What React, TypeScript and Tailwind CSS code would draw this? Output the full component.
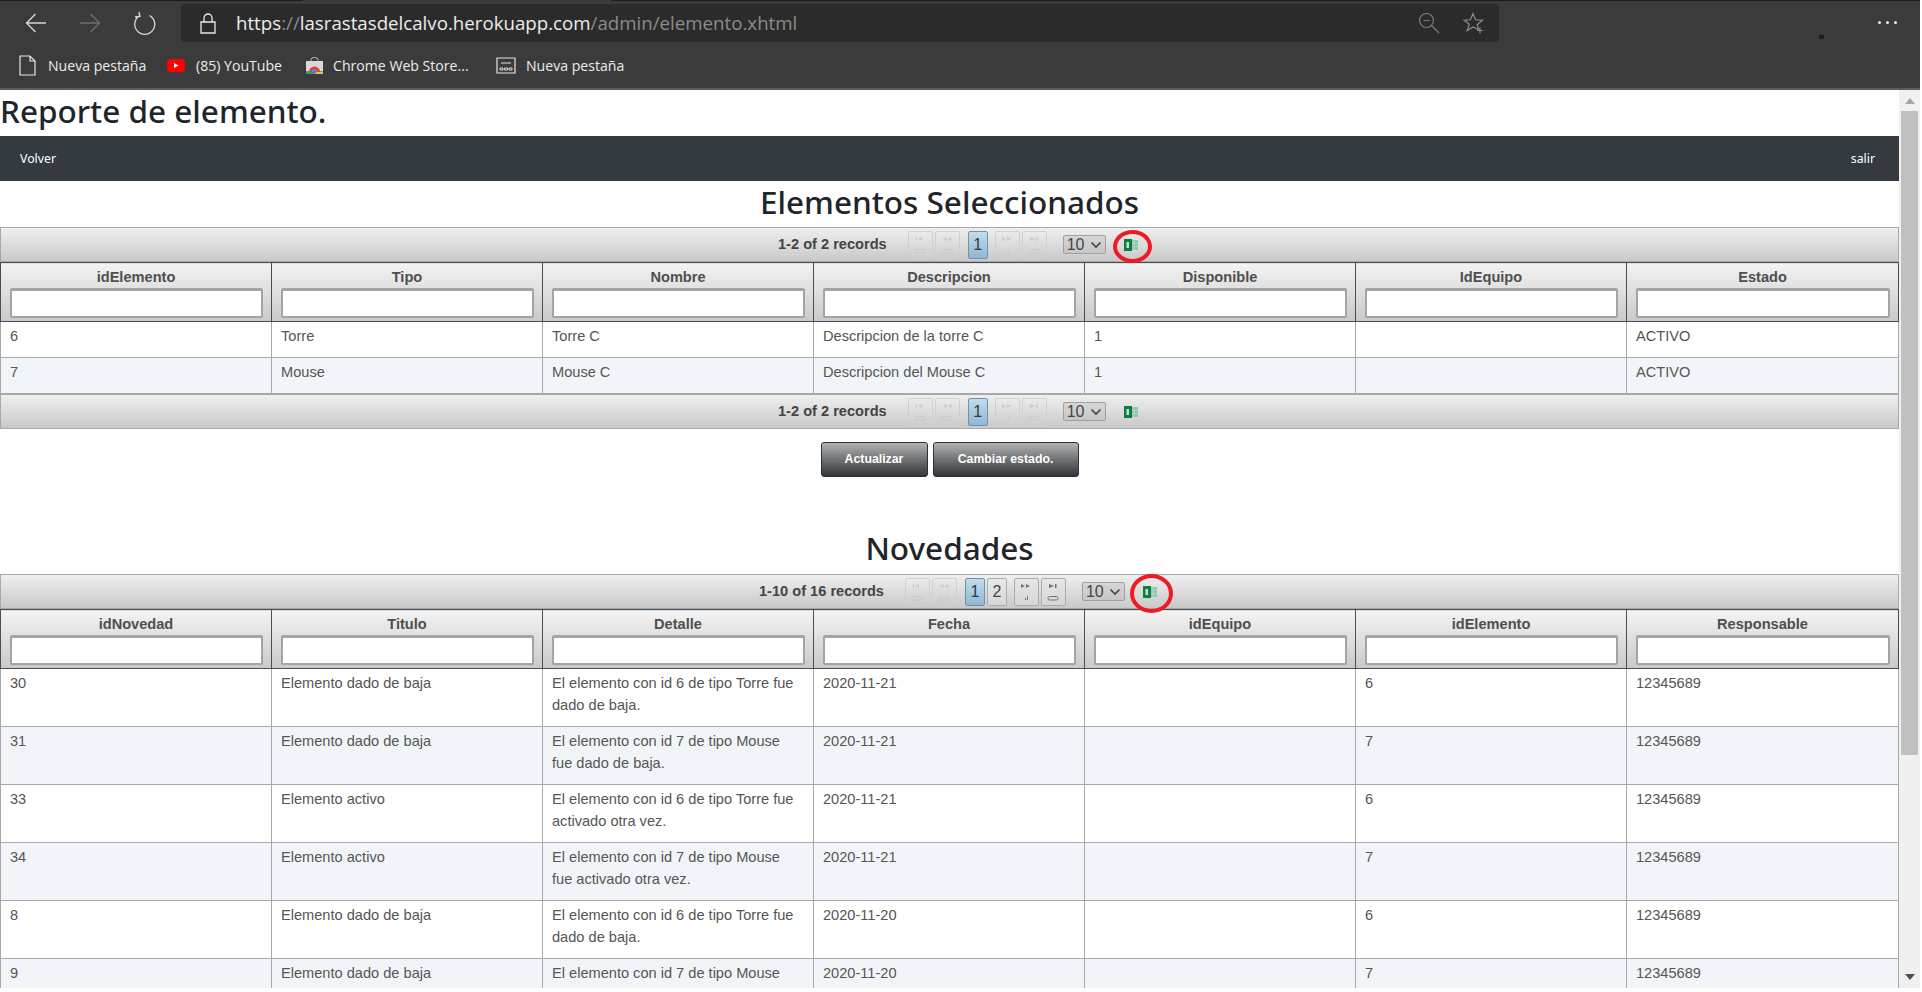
import React from 'react';

const ExcelIcon = () => (
  <svg width="14" height="12" viewBox="0 0 14 12" className="block">
    <rect x="6" y="1" width="8" height="10" fill="#8cc7a6" />
    <path d="M10 1v10M6 4.300h8M6 7.600h8" stroke="#b7dcc7" strokeWidth="0.900" />
    <rect x="0" y="0" width="8" height="12" fill="#107c41" />
    <rect x="2.500" y="3" width="2.500" height="6" fill="#bfe3cf" />
  </svg>
);

const Ring = ({ className }: { className: string }) => (
  <div className={`absolute border-[4px] border-[#ed1c24] rounded-[50%] ${className}`}></div>
);

// the small two part glyph of the pager buttons
const PagerGlyph = ({ kind }: { kind: 'first' | 'prev' | 'next' | 'last' }) => (
  <svg width="16" height="20" viewBox="0 0 16 20" className="block">
    {kind === 'first' && <path d="M4 2h1v4H4zM10 2v4L6 4z" fill="currentColor" />}
    {kind === 'prev' && <path d="M7.500 2v4L3.500 4zM12.500 2v4L8.500 4z" fill="currentColor" />}
    {kind === 'next' && <path d="M3 2v4l4-2zM8 2v4l4-2z" fill="currentColor" />}
    {kind === 'last' && <path d="M4 2v4l5-2zM10 2h1.500v4H10z" fill="currentColor" />}
    {kind === 'next' ? (
      <path d="M7 18v-2h1v2zM9 18v-4h1v4z" fill="currentColor" />
    ) : (
      <rect x="3" y="14.500" width="10" height="3.500" rx="1.500" fill="none" stroke="currentColor" />
    )}
  </svg>
);

const PagerButton = ({ kind, disabled }: { kind: 'first' | 'prev' | 'next' | 'last'; disabled: boolean }) => (
  <span
    className={`flex items-center justify-center w-[25px] h-[28px] rounded-[2px] border ${
      disabled
        ? 'border-[#d0d0d0] text-[#cacaca]'
        : 'border-[#ababab] text-[#6a747c] bg-linear-to-b from-[#e6e6e6] to-[#d6d6d6]'
    }`}
  >
    <PagerGlyph kind={kind} />
  </span>
);

const PageNumber = ({ n, active }: { n: number; active?: boolean }) => (
  <span
    className={`flex items-center justify-center w-[20px] h-[28px] rounded-[2px] border text-[16px] ${
      active
        ? 'border-[#6d93ad] bg-linear-to-b from-[#c2dcec] to-[#8fb8d2] text-[#2f3a42]'
        : 'border-[#ababab] bg-linear-to-b from-[#e8e8e8] to-[#d6d6d6] text-[#444]'
    }`}
  >
    {n}
  </span>
);

const Pager = ({
  label,
  pages,
  nextEnabled,
  ring,
  offset,
}: {
  label: string;
  pages: number[];
  nextEnabled: boolean;
  ring?: string;
  offset: string;
}) => (
  <div className="relative h-[35px] border border-[#a8a8a8] bg-linear-to-b from-[#efefef] to-[#c9c9c9]">
    <div className={`flex items-center h-full ${offset}`}>
      <span className="font-bold text-[14.600px] text-[#444]">{label}</span>
      <div className="flex items-center gap-[2px] ml-[21px]">
        <PagerButton kind="first" disabled />
        <PagerButton kind="prev" disabled />
      </div>
      <div className="flex items-center gap-[2px] ml-[8px]">
        {pages.map((p) => (
          <PageNumber key={p} n={p} active={p === 1} />
        ))}
      </div>
      <div className="flex items-center gap-[2px] ml-[7px]">
        <PagerButton kind="next" disabled={!nextEnabled} />
        <PagerButton kind="last" disabled={!nextEnabled} />
      </div>
      <span className="flex items-center justify-between ml-[16px] w-[43px] h-[19px] px-[3px] rounded-[2px] border border-[#a0a0a0] bg-linear-to-b from-[#d6d6d6] to-[#c6c6c6] text-[16px] text-[#444]">
        10
        <svg width="12" height="8" viewBox="0 0 12 8">
          <path d="M1.500 1.500 6 6l4.500-4.500" fill="none" stroke="#444" strokeWidth="1.600" />
        </svg>
      </span>
      <span className="ml-[18px]">
        <ExcelIcon />
      </span>
    </div>
    {ring && <Ring className={ring} />}
  </div>
);

const DataTable = ({
  columns,
  rows,
  rowHeight,
}: {
  columns: string[];
  rows: string[][];
  rowHeight: string;
}) => (
  <table className="w-full table-fixed border-collapse">
    <colgroup>
      <col className="w-[271px]" />
      <col className="w-[271px]" />
      <col className="w-[271px]" />
      <col className="w-[271px]" />
      <col className="w-[271px]" />
      <col className="w-[271px]" />
      <col />
    </colgroup>
    <thead>
      <tr>
        {columns.map((c) => (
          <th
            key={c}
            className="h-[59px] p-0 align-top border border-[#474e57] bg-linear-to-b from-[#f3f3f3] to-[#c9c9c9] font-bold text-[14.600px] text-[#4f4f4f]"
          >
            <div className="leading-[16px] mt-[6px]">{c}</div>
            <div className="ml-[9px] mr-[8px] mt-[3px] h-[30px] bg-white rounded-[2px] border-2 border-t-[3px] border-[#a4a4a4]"></div>
          </th>
        ))}
      </tr>
    </thead>
    <tbody>
      {rows.map((r, i) => (
        <tr key={i} className={i % 2 === 1 ? 'bg-[#f1f5f9]' : 'bg-white'}>
          {r.map((v, j) => (
            <td
              key={j}
              className={`${rowHeight} align-top pl-[9px] pr-[14px] pt-[3px] pb-0 border border-[#a8a8a8] text-[14.600px] leading-[22px] text-[#555]`}
            >
              {v}
            </td>
          ))}
        </tr>
      ))}
    </tbody>
  </table>
);

const elementos = [
  ['6', 'Torre', 'Torre C', 'Descripcion de la torre C', '1', '', 'ACTIVO'],
  ['7', 'Mouse', 'Mouse C', 'Descripcion del Mouse C', '1', '', 'ACTIVO'],
];

const baja6 = 'El elemento con id 6 de tipo Torre fue dado de baja.';
const baja7 = 'El elemento con id 7 de tipo Mouse fue dado de baja.';

const novedades = [
  ['30', 'Elemento dado de baja', baja6, '2020-11-21', '', '6', '12345689'],
  ['31', 'Elemento dado de baja', baja7, '2020-11-21', '', '7', '12345689'],
  ['33', 'Elemento activo', 'El elemento con id 6 de tipo Torre fue activado otra vez.', '2020-11-21', '', '6', '12345689'],
  ['34', 'Elemento activo', 'El elemento con id 7 de tipo Mouse fue activado otra vez.', '2020-11-21', '', '7', '12345689'],
  ['8', 'Elemento dado de baja', baja6, '2020-11-20', '', '6', '12345689'],
  ['9', 'Elemento dado de baja', baja7, '2020-11-20', '', '7', '12345689'],
];

const BrowserBar = () => (
  <div className="h-[90px] shrink-0 bg-[#3b3b3b] border-b-2 border-[#5c5c5c] font-['Open_Sans',sans-serif] text-[#ececec]">
    <div className="flex h-px">
      <div className="w-[303px] bg-[#1c1c1c]"></div>
      <div className="w-[308px]"></div>
      <div className="flex-1 bg-[#1c1c1c]"></div>
    </div>
    <div className="relative flex items-center h-[49px] pb-[5px]">
      <svg width="22" height="20" viewBox="0 0 22 20" className="ml-[25px]" fill="none" stroke="#d8d8d8" strokeWidth="1.300">
        <path d="M21 10H1.500M10.500 1 1.500 10l9 9" />
      </svg>
      <svg width="22" height="20" viewBox="0 0 22 20" className="ml-[32px]" fill="none" stroke="#6e6e6e" strokeWidth="1.300">
        <path d="M1 10h19.500M11.500 1l9 9-9 9" />
      </svg>
      <svg width="22" height="24" viewBox="0 0 22 24" className="ml-[33px]" fill="none" stroke="#d8d8d8" strokeWidth="1.300">
        <path d="M6 4.500a10 10 0 1 0 9.500 0M5 1l1 4.500-5 .5" />
      </svg>
      <div className="flex items-center ml-[25px] w-[1318px] h-[38px] rounded-[4px] bg-[#2b2b2b]">
        <svg width="16" height="21" viewBox="0 0 16 21" className="ml-[19px]" fill="none" stroke="#e8e8e8" strokeWidth="1.300">
          <path d="M1 9h14v11H1zM4 9V5a4 4 0 0 1 8 0v4" />
        </svg>
        <span className="ml-[20px] mt-px text-[18.700px] leading-none whitespace-nowrap">
          https<span className="text-[#8b8b8b]">://</span>lasrastasdelcalvo.herokuapp.com
          <span className="text-[#8b8b8b]">/admin/elemento.xhtml</span>
        </span>
        <div className="flex-1"></div>
        <svg width="22" height="22" viewBox="0 0 22 22" fill="none" stroke="#7d7d7d" strokeWidth="1.200">
          <circle cx="8.500" cy="8.500" r="7" />
          <path d="M5.500 8.500h6M13.500 13.500l7.500 7.500" />
        </svg>
        <svg width="22" height="22" viewBox="0 0 22 22" className="ml-[23px] mr-[14px]" fill="none" stroke="#8a8a8a" strokeWidth="1.200">
          <path d="M10 1.500l2.600 6.300 6.900.5-5.300 4.400 1.600 5-5.800-2.800-5.800 3.600 2.100-6.200L1 8.300l6.400-.5z" />
          <path d="M17 15.500v6M14 18.500h6" />
        </svg>
      </div>
      <div className="flex-1"></div>
      <span className="absolute left-[1819px] top-[34px] w-[5px] h-[4px] bg-[#1e1e1e]"></span>
      <div className="flex gap-[5px] mr-[23px] mb-[2px]">
        <span className="w-[3px] h-[3px] rounded-full bg-[#e8e8e8]"></span>
        <span className="w-[3px] h-[3px] rounded-full bg-[#e8e8e8]"></span>
        <span className="w-[3px] h-[3px] rounded-full bg-[#e8e8e8]"></span>
      </div>
    </div>
    <div className="flex items-center h-[38px] pb-[7px] text-[14.100px] whitespace-nowrap">
      <svg width="17" height="21" viewBox="0 0 17 21" className="ml-[19px]" fill="none" stroke="#e6e6e6" strokeWidth="1.200">
        <path d="M1 1h10l5 5v14H1zM11 1v5h5" />
      </svg>
      <span className="ml-[12px] w-[98px]">Nueva pestaña</span>
      <svg width="18" height="13" viewBox="0 0 18 13" className="ml-[21px]">
        <rect width="18" height="13" rx="3.500" fill="#f00" />
        <path d="M7 4v5l4.500-2.500z" fill="#fff" />
      </svg>
      <span className="ml-[11px] w-[88px]">(85) YouTube</span>
      <svg width="17" height="17" viewBox="0 0 17 17" className="ml-[22px]">
        <path d="M0 4h17v13H0z" fill="#d8d8d8" />
        <path d="M5 4V2.500a3.500 2 0 0 1 7 0V4" fill="none" stroke="#bdbdbd" />
        <path d="M0 17v-3h17v3z" fill="#4a8fe0" />
        <path d="M3 15a5.500 5.500 0 0 1 11 0h-3a2.500 2.500 0 0 0-5 0z" fill="#d9413a" />
        <path d="M0 17h8v-2H0z" fill="#3ca35a" />
        <path d="M9 17h8v-2H9z" fill="#f2c037" />
        <circle cx="8.500" cy="14.500" r="2" fill="#3f82e0" />
      </svg>
      <span className="ml-[10px] w-[137px]">Chrome Web Store...</span>
      <svg width="20" height="17" viewBox="0 0 20 17" className="ml-[26px]" fill="none" stroke="#e6e6e6" strokeWidth="1.200">
        <path d="M1 1h18v15H1zM5 6h10" />
        <path d="M4 11h3v2H4zM8.500 11h3v2h-3zM13 11h3v2h-3z" strokeWidth="0.900" />
      </svg>
      <span className="ml-[10px]">Nueva pestaña</span>
    </div>
  </div>
);

const Scrollbar = () => (
  <div className="w-[21px] shrink-0 flex flex-col items-center bg-[#f0f0f0]">
    <div className="h-[21px] flex items-center justify-center">
      <div className="w-0 h-0 border-x-[5px] border-x-transparent border-b-[6px] border-b-[#a6a6a6]"></div>
    </div>
    <div className="w-[17px] h-[644px] bg-[#c0c0c0]"></div>
    <div className="flex-1"></div>
    <div className="h-[14px] flex items-start justify-center">
      <div className="w-0 h-0 border-x-[5px] border-x-transparent border-t-[6px] border-t-[#505050]"></div>
    </div>
  </div>
);

export default function App() {
  return (
    <div className="w-[1920px] h-[988px] overflow-hidden flex flex-col bg-white font-['Liberation_Sans',Arial,sans-serif]">
      <BrowserBar />
      <div className="flex flex-1 min-h-0">
        <main className="w-[1899px] shrink-0 overflow-hidden">
          <h1 className="h-[46px] font-['Noto_Sans',sans-serif] font-medium text-[31.500px] leading-[42px] text-[#212529]">
            Reporte de elemento.
          </h1>
          <nav className="flex items-center justify-between h-[45px] pl-[20px] pr-[24px] pt-[2px] bg-[#343a40] font-['Noto_Sans',sans-serif] text-[12.300px] text-white">
            <span>Volver</span>
            <span>salir</span>
          </nav>
          <h2 className="h-[46px] text-center font-['Noto_Sans',sans-serif] font-medium text-[31.500px] leading-[42px] text-[#212529]">
            Elementos Seleccionados
          </h2>
          <Pager
            label="1-2 of 2 records"
            pages={[1]}
            nextEnabled={false}
            offset="pl-[777px]"
            ring="left-[1112px] top-[2px] w-[39px] h-[33px]"
          />
          <DataTable
            columns={['idElemento', 'Tipo', 'Nombre', 'Descripcion', 'Disponible', 'IdEquipo', 'Estado']}
            rows={elementos}
            rowHeight="h-[36px]"
          />
          <Pager label="1-2 of 2 records" pages={[1]} nextEnabled={false} offset="pl-[777px]" />
          <div className="flex justify-center gap-[5px] mt-[13px]">
            <button className="w-[107px] h-[35px] rounded-[3px] border border-[#2b3036] bg-linear-to-b from-[#b4b4b4] to-[#32373c] font-bold text-[12.300px] text-white">
              Actualizar
            </button>
            <button className="w-[146px] h-[35px] rounded-[3px] border border-[#2b3036] bg-linear-to-b from-[#b4b4b4] to-[#32373c] font-bold text-[12.300px] text-white">
              Cambiar estado.
            </button>
          </div>
          <h2 className="h-[49px] mt-[48px] text-center font-['Noto_Sans',sans-serif] font-medium text-[31.500px] leading-[46px] text-[#212529]">
            Novedades
          </h2>
          <Pager
            label="1-10 of 16 records"
            pages={[1, 2]}
            nextEnabled
            offset="pl-[758px]"
            ring="left-[1129px] top-[-1px] w-[43px] h-[39px]"
          />
          <DataTable
            columns={['idNovedad', 'Titulo', 'Detalle', 'Fecha', 'idEquipo', 'idElemento', 'Responsable']}
            rows={novedades}
            rowHeight="h-[58px]"
          />
        </main>
        <Scrollbar />
      </div>
    </div>
  );
}
